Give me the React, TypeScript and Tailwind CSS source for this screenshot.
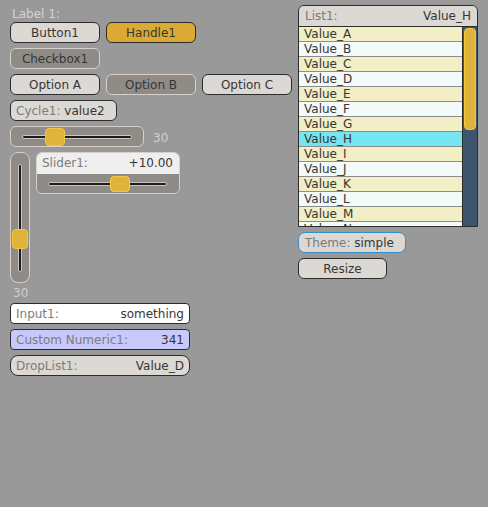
import React from "react";

type Variant = "light" | "gold" | "dark";

const variantClass: Record<Variant, string> = {
  light: "bg-[#dcd8d4] border-[#2c2c2c]",
  gold: "bg-[#dcaa32] border-[#2c2c2c]",
  dark: "bg-[#8f8b87] border-[#d8d0c8]",
};

function Btn({ children, variant = "light", w = "w-[90px]" }: { children: React.ReactNode; variant?: Variant; w?: string }) {
  return (
    <div className={`h-[21px] ${w} rounded-[6px] border pt-[1px] text-center leading-[19px] ${variantClass[variant]}`}>
      {children}
    </div>
  );
}

function Thumb({ className }: { className: string }) {
  return <div className={`absolute rounded-[4px] border border-[#f6c840] bg-[#e0b33a] ${className}`} />;
}

function HTrack({ thumbLeft, thumbClass }: { thumbLeft: string; thumbClass: string }) {
  return (
    <div className="relative h-[4px] flex-1 rounded-full border border-[#cfc7bf] bg-[#1c1c1c]">
      <Thumb className={`${thumbLeft} ${thumbClass}`} />
    </div>
  );
}

function Field({ label, value, bg, radius = "rounded-[4px]" }: { label: string; value: string; bg: string; radius?: string }) {
  return (
    <div className={`mt-[5px] flex h-[21px] w-[180px] items-center justify-between border border-[#2c2c2c] pl-[5px] pr-[5px] pt-[1px] leading-[19px] ${bg} ${radius}`}>
      <span className="text-[#7c7c7c]">{label}</span>
      <span>{value}</span>
    </div>
  );
}

const items = ["A", "B", "C", "D", "E", "F", "G", "H", "I", "J", "K", "L", "M", "N"];

export default function App() {
  return (
    <div className="flex min-h-[507px] w-[488px] items-start gap-[6px] bg-[#999999] pl-[10px] pt-[5px] font-['DejaVu_Sans',sans-serif] text-[12px] text-[#363636]">
      {/* left column of widgets */}
      <div className="flex w-[282px] flex-col">
        <div className="h-[17px] pl-[2px] pt-[2px] leading-[14px] text-[#d4d4d4]">Label 1:</div>
        <div className="flex gap-[6px]">
          <Btn>Button1</Btn>
          <Btn variant="gold">Handle1</Btn>
        </div>
        <div className="mt-[5px] flex">
          <Btn variant="dark">Checkbox1</Btn>
        </div>
        <div className="mt-[5px] flex gap-[6px]">
          <Btn>Option A</Btn>
          <Btn variant="dark">Option B</Btn>
          <Btn>Option C</Btn>
        </div>
        <div className="mt-[5px] flex">
          <div className="h-[21px] w-[107px] rounded-[6px] border border-[#2c2c2c] bg-[#dcd8d4] pl-[5px] pt-[1px] leading-[19px]">
            <span className="text-[#7c7c7c]">Cycle1:</span> value2
          </div>
        </div>
        <div className="mt-[5px] flex items-center">
          <div className="flex h-[21px] w-[134px] items-center rounded-[6px] border border-[#d8d0c8] bg-[#8f8b87] pl-[11px] pr-[11px]">
            <HTrack thumbLeft="left-[22px]" thumbClass="top-[-8px] h-[18px] w-[20px]" />
          </div>
          <span className="ml-[9px] pt-[2px] text-[#d0d0d0]">30</span>
        </div>
        <div className="mt-[5px] flex gap-[6px]">
          <div className="flex h-[131px] w-[20px] justify-center rounded-[8px] border border-[#d8d0c8] bg-[#8f8b87] pb-[10px] pt-[11px]">
            <div className="relative w-[4px] rounded-full border border-[#cfc7bf] bg-[#1c1c1c]">
              <Thumb className="left-[-7px] top-[64px] h-[20px] w-[16px]" />
            </div>
          </div>
          <div className="h-[42px] w-[144px] overflow-hidden rounded-[6px] border border-[#d8d0c8]">
            <div className="flex h-[21px] justify-between bg-[#eeeeee] pl-[5px] pr-[6px] leading-[21px]">
              <span className="text-[#7c7c7c]">Slider1:</span>
              <span>+10.00</span>
            </div>
            <div className="flex h-[19px] items-center bg-[#8f8b87] pl-[11px] pr-[12px]">
              <HTrack thumbLeft="left-[61px]" thumbClass="top-[-7px] h-[16px] w-[20px]" />
            </div>
          </div>
        </div>
        <div className="h-[20px] pl-[3px] leading-[20px] text-[#d0d0d0]">30</div>
        <div className="-mt-[5px] flex flex-col">
          <Field label="Input1:" value="something" bg="bg-white" />
          <Field label="Custom Numeric1:" value="341" bg="bg-[#c8c8fa]" />
          <Field label="DropList1:" value="Value_D" bg="bg-[#dcd8d4]" radius="rounded-[8px]" />
        </div>
      </div>

      {/* right column: list and theme controls */}
      <div className="flex flex-col">
        <div className="flex h-[222px] w-[180px] flex-col overflow-hidden rounded-t-[6px] border border-[#2c2c2c]">
          <div className="flex h-[21px] shrink-0 justify-between border-b border-[#2c2c2c] bg-[#dcd8d4] pl-[6px] pr-[6px] pt-[1px] leading-[19px]">
            <span className="text-[#7c7c7c]">List1:</span>
            <span>Value_H</span>
          </div>
          <div className="flex min-h-0 flex-1">
            <div className="flex-1 overflow-hidden">
              {items.map((l, i) => (
                <div
                  key={l}
                  className={`h-[15px] border-b border-[#8c8c8c] pl-[5px] leading-[14px] ${
                    l === "H" ? "bg-[#74e6f2]" : i % 2 === 0 ? "bg-[#f2eec6]" : "bg-[#f2fafa]"
                  }`}
                >
                  Value_{l}
                </div>
              ))}
            </div>
            <div className="w-[15px] border-l border-[#2c2c2c] bg-[#3d566e] pl-[1px] pr-[1px] pt-[1px]">
              <div className="h-[102px] rounded-[4px] border border-[#f6c840] bg-[#e0b33a]" />
            </div>
          </div>
        </div>
        <div className="mt-[5px] h-[21px] w-[108px] rounded-[7px] border border-[#3a8cc4] bg-[#dcd8d4] pl-[6px] pt-[1px] leading-[19px]">
          <span className="text-[#7c7c7c]">Theme:</span> simple
        </div>
        <div className="mt-[5px]">
          <Btn w="w-[89px]">Resize</Btn>
        </div>
      </div>
    </div>
  );
}
